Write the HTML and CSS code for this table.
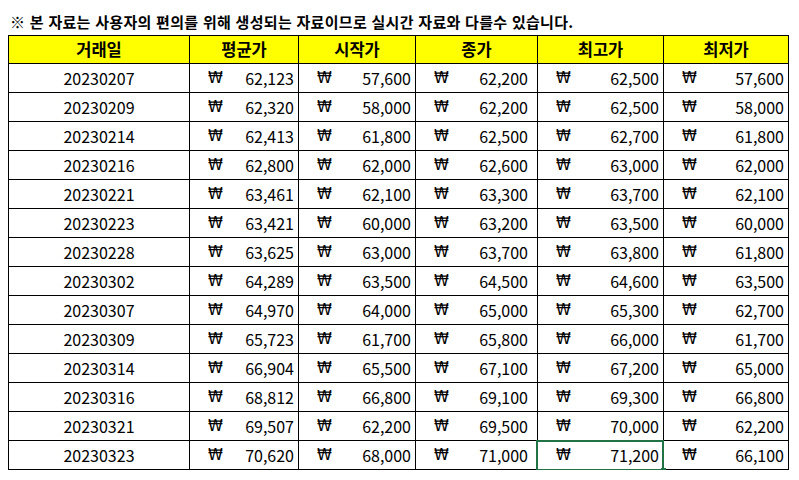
FILE: index.html
```html
<!DOCTYPE html>
<html lang="ko">
<head>
<meta charset="utf-8">
<link rel="stylesheet" href="styles.css">
</head>
<body>
<div class="notice">※ 본 자료는 사용자의 편의를 위해 생성되는 자료이므로 실시간 자료와 다를수 있습니다.</div>
<table class="sheet">
  <colgroup>
    <col class="c-date"><col class="c-avg"><col class="c-open"><col class="c-close"><col class="c-high"><col class="c-low">
  </colgroup>
  <thead>
    <tr><th>거래일</th><th>평균가</th><th>시작가</th><th>종가</th><th>최고가</th><th>최저가</th></tr>
  </thead>
  <tbody>
    <tr><td class="date">20230207</td><td class="m"><span class="won">₩</span><span>62,123</span></td><td class="m"><span class="won">₩</span><span>57,600</span></td><td class="m close"><span class="won">₩</span><span>62,200</span></td><td class="m"><span class="won">₩</span><span>62,500</span></td><td class="m"><span class="won">₩</span><span>57,600</span></td></tr>
    <tr><td class="date">20230209</td><td class="m"><span class="won">₩</span><span>62,320</span></td><td class="m"><span class="won">₩</span><span>58,000</span></td><td class="m close"><span class="won">₩</span><span>62,200</span></td><td class="m"><span class="won">₩</span><span>62,500</span></td><td class="m"><span class="won">₩</span><span>58,000</span></td></tr>
    <tr><td class="date">20230214</td><td class="m"><span class="won">₩</span><span>62,413</span></td><td class="m"><span class="won">₩</span><span>61,800</span></td><td class="m close"><span class="won">₩</span><span>62,500</span></td><td class="m"><span class="won">₩</span><span>62,700</span></td><td class="m"><span class="won">₩</span><span>61,800</span></td></tr>
    <tr><td class="date">20230216</td><td class="m"><span class="won">₩</span><span>62,800</span></td><td class="m"><span class="won">₩</span><span>62,000</span></td><td class="m close"><span class="won">₩</span><span>62,600</span></td><td class="m"><span class="won">₩</span><span>63,000</span></td><td class="m"><span class="won">₩</span><span>62,000</span></td></tr>
    <tr><td class="date">20230221</td><td class="m"><span class="won">₩</span><span>63,461</span></td><td class="m"><span class="won">₩</span><span>62,100</span></td><td class="m close"><span class="won">₩</span><span>63,300</span></td><td class="m"><span class="won">₩</span><span>63,700</span></td><td class="m"><span class="won">₩</span><span>62,100</span></td></tr>
    <tr><td class="date">20230223</td><td class="m"><span class="won">₩</span><span>63,421</span></td><td class="m"><span class="won">₩</span><span>60,000</span></td><td class="m close"><span class="won">₩</span><span>63,200</span></td><td class="m"><span class="won">₩</span><span>63,500</span></td><td class="m"><span class="won">₩</span><span>60,000</span></td></tr>
    <tr><td class="date">20230228</td><td class="m"><span class="won">₩</span><span>63,625</span></td><td class="m"><span class="won">₩</span><span>63,000</span></td><td class="m close"><span class="won">₩</span><span>63,700</span></td><td class="m"><span class="won">₩</span><span>63,800</span></td><td class="m"><span class="won">₩</span><span>61,800</span></td></tr>
    <tr><td class="date">20230302</td><td class="m"><span class="won">₩</span><span>64,289</span></td><td class="m"><span class="won">₩</span><span>63,500</span></td><td class="m close"><span class="won">₩</span><span>64,500</span></td><td class="m"><span class="won">₩</span><span>64,600</span></td><td class="m"><span class="won">₩</span><span>63,500</span></td></tr>
    <tr><td class="date">20230307</td><td class="m"><span class="won">₩</span><span>64,970</span></td><td class="m"><span class="won">₩</span><span>64,000</span></td><td class="m close"><span class="won">₩</span><span>65,000</span></td><td class="m"><span class="won">₩</span><span>65,300</span></td><td class="m"><span class="won">₩</span><span>62,700</span></td></tr>
    <tr><td class="date">20230309</td><td class="m"><span class="won">₩</span><span>65,723</span></td><td class="m"><span class="won">₩</span><span>61,700</span></td><td class="m close"><span class="won">₩</span><span>65,800</span></td><td class="m"><span class="won">₩</span><span>66,000</span></td><td class="m"><span class="won">₩</span><span>61,700</span></td></tr>
    <tr><td class="date">20230314</td><td class="m"><span class="won">₩</span><span>66,904</span></td><td class="m"><span class="won">₩</span><span>65,500</span></td><td class="m close"><span class="won">₩</span><span>67,100</span></td><td class="m"><span class="won">₩</span><span>67,200</span></td><td class="m"><span class="won">₩</span><span>65,000</span></td></tr>
    <tr><td class="date">20230316</td><td class="m"><span class="won">₩</span><span>68,812</span></td><td class="m"><span class="won">₩</span><span>66,800</span></td><td class="m close"><span class="won">₩</span><span>69,100</span></td><td class="m"><span class="won">₩</span><span>69,300</span></td><td class="m"><span class="won">₩</span><span>66,800</span></td></tr>
    <tr><td class="date">20230321</td><td class="m"><span class="won">₩</span><span>69,507</span></td><td class="m"><span class="won">₩</span><span>62,200</span></td><td class="m close"><span class="won">₩</span><span>69,500</span></td><td class="m"><span class="won">₩</span><span>70,000</span></td><td class="m"><span class="won">₩</span><span>62,200</span></td></tr>
    <tr><td class="date">20230323</td><td class="m"><span class="won">₩</span><span>70,620</span></td><td class="m"><span class="won">₩</span><span>68,000</span></td><td class="m close"><span class="won">₩</span><span>71,000</span></td><td class="m selected"><span class="won">₩</span><span>71,200</span></td><td class="m"><span class="won">₩</span><span>66,100</span></td></tr>
  </tbody>
</table>
</body>
</html>
```

FILE: styles.css
```css
html, body {
  background: #ffffff;
}
body {
  margin: 8px;
  font-family: "Noto Sans CJK KR", "Noto Sans", sans-serif;
  color: #000;
}
.notice {
  height: 27px;
  line-height: 27px;
  padding-left: 2px;
  font-size: 15px;
  letter-spacing: 0.3px;
  font-weight: bold;
  white-space: nowrap;
}
.sheet {
  border-collapse: collapse;
  table-layout: fixed;
  width: 781px;
}
.c-date { width: 181px; }
.c-avg { width: 109px; }
.c-open { width: 117px; }
.c-close { width: 122px; }
.c-high { width: 126px; }
.c-low { width: 125px; }
.sheet th,
.sheet td {
  border: 1px solid #000;
  padding: 0;
  white-space: nowrap;
}
.sheet th {
  background: #ffff00;
  height: 27px;
  font-size: 16.5px;
  font-weight: bold;
  text-align: center;
  line-height: 27px;
}
.sheet td {
  height: 28px;
  font-size: 16px;
  line-height: 28px;
}
.sheet td.date {
  text-align: center;
}
.sheet td.m {
  padding-left: 18px;
  padding-right: 4px;
}
.sheet td.m.close {
  padding-right: 9px;
}
.sheet td.m > span:first-child {
  float: left;
}
.sheet td.m > span:last-child {
  float: right;
}
.sheet td.m > .won {
  font-family: "DejaVu Sans", sans-serif;
  font-weight: normal;
  font-size: 15px;
}
.sheet td.selected {
  position: relative;
}
.sheet td.selected::after {
  content: "";
  position: absolute;
  left: -2px;
  top: -1px;
  right: -1px;
  bottom: -2px;
  border: 2px solid #217346;
}
.sheet td.selected::before {
  content: "";
  position: absolute;
  right: -3px;
  bottom: -4px;
  width: 5px;
  height: 5px;
  background: #217346;
  z-index: 1;
}
```
